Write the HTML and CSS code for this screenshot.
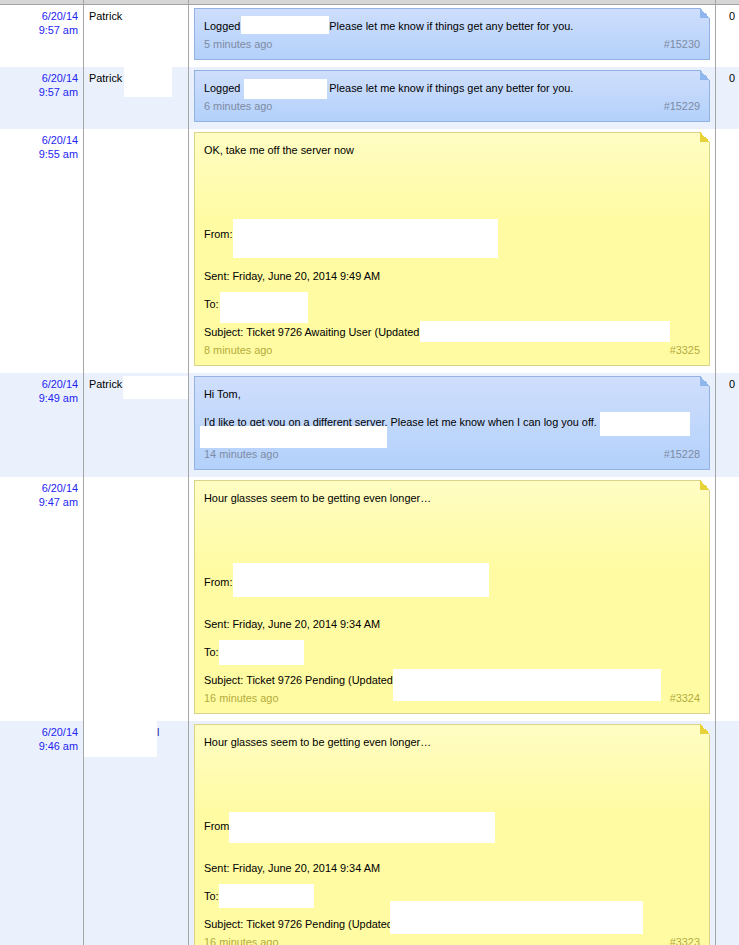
FILE: index.html
```html
<!DOCTYPE html>
<html>
<head>
<meta charset="utf-8">
<link rel="stylesheet" href="styles.css">
</head>
<body>
<div class="grid">
  <div class="row head">
    <div class="c-date"></div><div class="c-name"></div><div class="c-note"></div><div class="c-cnt"></div>
  </div>

  <div class="row">
    <div class="c-date">6/20/14<br>9:57 am</div>
    <div class="c-name">Patrick</div>
    <div class="c-note">
      <div class="note blue">
        <div class="body">Logged<span class="rd r1"></span>Please let me know if things get any better for you.</div>
        <div class="foot"><span>5 minutes ago</span><span>#15230</span></div>
      </div>
    </div>
    <div class="c-cnt">0</div>
  </div>

  <div class="row alt">
    <div class="c-date">6/20/14<br>9:57 am</div>
    <div class="c-name">Patrick<span class="rd n2"></span></div>
    <div class="c-note">
      <div class="note blue">
        <div class="body">Logged<span class="rd r2"></span>Please let me know if things get any better for you.</div>
        <div class="foot"><span>6 minutes ago</span><span>#15229</span></div>
      </div>
    </div>
    <div class="c-cnt">0</div>
  </div>

  <div class="row">
    <div class="c-date">6/20/14<br>9:55 am</div>
    <div class="c-name"></div>
    <div class="c-note">
      <div class="note yellow">
        <div class="body">OK, take me off the server now<br><br><br><br><br><br>From:<span class="rd r3a"></span><br><br><br>Sent: Friday, June 20, 2014 9:49 AM<br><br>To:<span class="rd r3b"></span><br><br>Subject: Ticket 9726 Awaiting User (Updated<span class="rd r3c"></span></div>
        <div class="foot"><span>8 minutes ago</span><span>#3325</span></div>
      </div>
    </div>
    <div class="c-cnt"></div>
  </div>

  <div class="row alt">
    <div class="c-date">6/20/14<br>9:49 am</div>
    <div class="c-name">Patrick<span class="rd n4"></span></div>
    <div class="c-note">
      <div class="note blue">
        <div class="body">Hi Tom,<br><br>I'd like to get you on a different server. Please let me know when I can log you off. <span class="rd r4a"></span><br><span class="rd r4b"></span></div>
        <div class="foot"><span>14 minutes ago</span><span>#15228</span></div>
      </div>
    </div>
    <div class="c-cnt">0</div>
  </div>

  <div class="row">
    <div class="c-date">6/20/14<br>9:47 am</div>
    <div class="c-name"></div>
    <div class="c-note">
      <div class="note yellow">
        <div class="body">Hour glasses seem to be getting even longer…<br><br><br><br><br><br>From:<span class="rd r5a"></span><br><br><br>Sent: Friday, June 20, 2014 9:34 AM<br><br>To:<span class="rd r5b"></span><br><br>Subject: Ticket 9726 Pending (Updated<span class="rd r5c"></span></div>
        <div class="foot"><span>16 minutes ago</span><span>#3324</span></div>
      </div>
    </div>
    <div class="c-cnt"></div>
  </div>

  <div class="row alt">
    <div class="c-date">6/20/14<br>9:46 am</div>
    <div class="c-name c-name-red"><span class="rd n6"></span>l</div>
    <div class="c-note">
      <div class="note yellow">
        <div class="body">Hour glasses seem to be getting even longer…<br><br><br><br><br><br>From<span class="rd r6a"></span><br><br><br>Sent: Friday, June 20, 2014 9:34 AM<br><br>To:<span class="rd r6b"></span><br><br>Subject: Ticket 9726 Pending (Updated<span class="rd r6c"></span></div>
        <div class="foot"><span>16 minutes ago</span><span>#3323</span></div>
      </div>
    </div>
    <div class="c-cnt"></div>
  </div>
</div>
</body>
</html>
```

FILE: styles.css
```css
html, body {
  margin: 0;
  padding: 0;
  background: #ffffff;
}
body {
  font-family: "Liberation Sans", Arial, sans-serif;
  font-size: 10.9px;
  line-height: 14px;
  color: #000;
  width: 739px;
  overflow: hidden;
}
.grid {
  display: flex;
  flex-direction: column;
}
.row {
  display: flex;
  background: #ffffff;
}
.row.alt {
  background: #eaf1fd;
}
.row.head {
  height: 4px;
  background: #d6d6d6;
  border-bottom: 1px solid #a3a3a3;
}
.c-date, .c-name, .c-note {
  border-right: 1px solid #a6a6a6;
  flex: none;
}
.c-date {
  width: 78px;
  padding: 4px 5px 0 0;
  text-align: right;
  color: #2424f2;
}
.head .c-date { padding: 0; width: 83px; }
.c-name {
  width: 99px;
  padding: 4px 0 0 5px;
  white-space: nowrap;
  overflow: hidden;
}
.c-name-red {
  padding-left: 0;
  width: 104px;
  color: #2424a0;
}
.head .c-name { padding: 0; width: 104px; }
.c-note {
  width: 526px;
}
.c-cnt {
  flex: 1;
  padding: 4px 0 0 13px;
}
.head .c-cnt { padding: 0; }

.note {
  position: relative;
  margin: 3px 5px 7px 5px;
  border: 1px solid;
  padding: 10px 9px 8px 9px;
}
.note.blue {
  border-color: #93b2e2;
  background: linear-gradient(#cfdefc, #b3d1fb);
}
.note.yellow {
  border-color: #d9d38b;
  background: linear-gradient(#fffdc3 0px, #fffba2 90px, #fffba2);
}
.note::before {
  content: "";
  position: absolute;
  top: -1px;
  right: -1px;
  width: 10px;
  height: 10px;
  background: linear-gradient(45deg, #8fb7ee 50%, #ffffff 50%);
}
.alt .note::before {
  background: linear-gradient(45deg, #8fb7ee 50%, #eaf1fd 50%);
}
.note.yellow::before {
  background: linear-gradient(45deg, #e8d23a 50%, #ffffff 50%);
}
.alt .note.yellow::before {
  background: linear-gradient(45deg, #e8d23a 50%, #eaf1fd 50%);
}

.foot {
  display: flex;
  justify-content: space-between;
  margin-top: 4px;
}
.blue .foot { color: #7d8ba3; }
.yellow .foot { color: #b3ab3c; }

.rd {
  display: inline-block;
  vertical-align: top;
  background: #ffffff;
}
/* redaction boxes: margin-top + height + margin-bottom = 14px line */
.r1 { width: 88px; height: 18px; margin: -3px 0 -1px 1px; }
.r2 { width: 83px; height: 20px; margin: -2px 2px -4px 4px; }
.r3a { width: 265px; height: 39px; margin: -8px 0 -17px 1px; }
.r3b { width: 88px; height: 31px; margin: -5px 0 -12px 1px; }
.r3c { width: 250px; height: 21px; margin: -4px 0 -3px 1px; }
.r4a { width: 90px; height: 24px; margin: -3px 0 -7px 0; }
.r4b { width: 187px; height: 22px; margin: -3px 0 -5px -4px; }
.r5a { width: 256px; height: 34px; margin: -12px 0 -8px 1px; }
.r5b { width: 85px; height: 25px; margin: -5px 0 -6px 0; }
.r5c { width: 268px; height: 32px; margin: -4px 0 -14px 0; }
.r6a { width: 266px; height: 31px; margin: -7px 0 -10px 0; }
.r6b { width: 95px; height: 24px; margin: -5px 0 -5px 0; }
.r6c { width: 253px; height: 33px; margin: -16px 0 -3px -3px; }
.n2 { width: 48px; height: 30px; margin: -4px 0 -12px 2px; }
.n4 { width: 66px; height: 23px; margin: -1px 0 -8px 1px; }
.n6 { width: 73px; height: 36px; margin: -4px 0 -18px 0; }
```
